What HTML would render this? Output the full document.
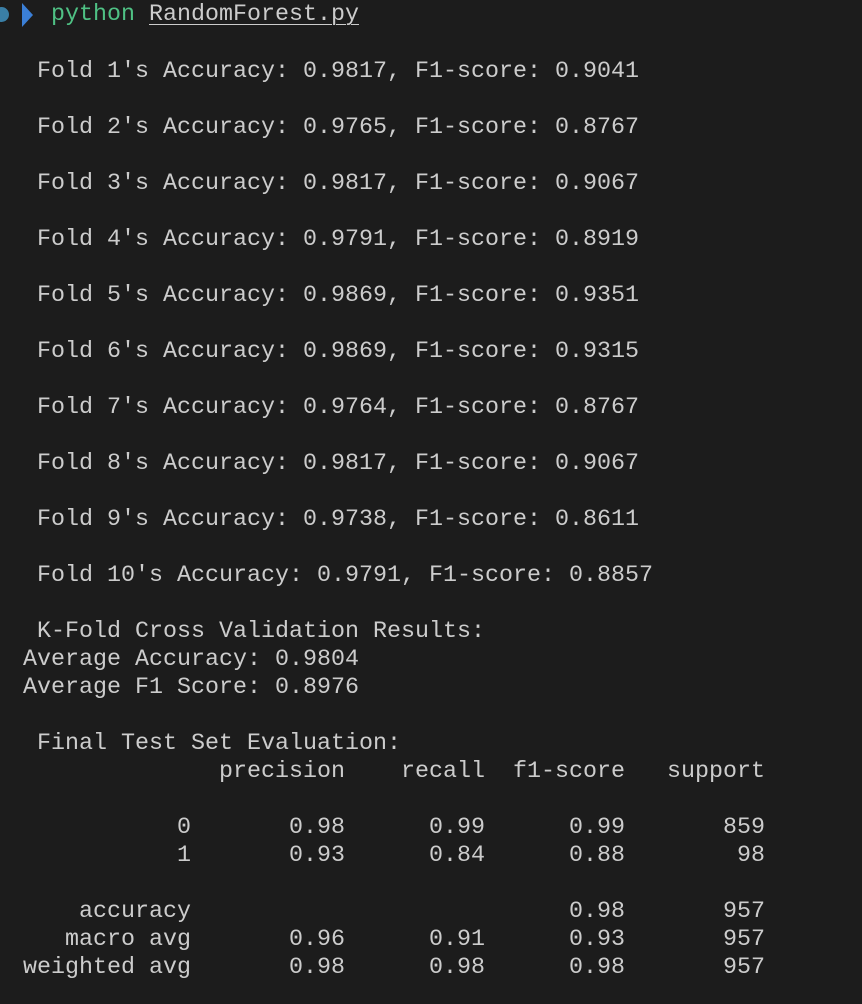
<!DOCTYPE html>
<html><head><meta charset="utf-8"><style>
html,body{margin:0;padding:0;background:#1c1c1c;width:862px;height:1004px;overflow:hidden}
pre{position:absolute;left:23px;top:0;margin:0;font-family:"Liberation Mono",monospace;font-size:23.33px;line-height:28px;color:#cccccc;white-space:pre}
.g{color:#4fc184}
.u{text-decoration:underline;text-decoration-thickness:1px;text-underline-offset:4px}
</style></head><body>
<div style="position:absolute;left:-6px;top:7px;width:15px;height:15px;border-radius:50%;background:#3a7fa6"></div>
<svg style="position:absolute;left:21px;top:2px" width="14" height="26"><polygon points="1,1 12,13 1,25" fill="#3b7fd6"/></svg>
<pre style="top:1px;left:51px"><span class="g">python</span> <span class="u">RandomForest.py</span></pre>
<pre style="top:58px">
 Fold 1's Accuracy: 0.9817, F1-score: 0.9041

 Fold 2's Accuracy: 0.9765, F1-score: 0.8767

 Fold 3's Accuracy: 0.9817, F1-score: 0.9067

 Fold 4's Accuracy: 0.9791, F1-score: 0.8919

 Fold 5's Accuracy: 0.9869, F1-score: 0.9351

 Fold 6's Accuracy: 0.9869, F1-score: 0.9315

 Fold 7's Accuracy: 0.9764, F1-score: 0.8767

 Fold 8's Accuracy: 0.9817, F1-score: 0.9067

 Fold 9's Accuracy: 0.9738, F1-score: 0.8611

 Fold 10's Accuracy: 0.9791, F1-score: 0.8857

 K-Fold Cross Validation Results:
Average Accuracy: 0.9804
Average F1 Score: 0.8976

 Final Test Set Evaluation:
              precision    recall  f1-score   support

           0       0.98      0.99      0.99       859
           1       0.93      0.84      0.88        98

    accuracy                           0.98       957
   macro avg       0.96      0.91      0.93       957
weighted avg       0.98      0.98      0.98       957
</pre>
</body></html>
